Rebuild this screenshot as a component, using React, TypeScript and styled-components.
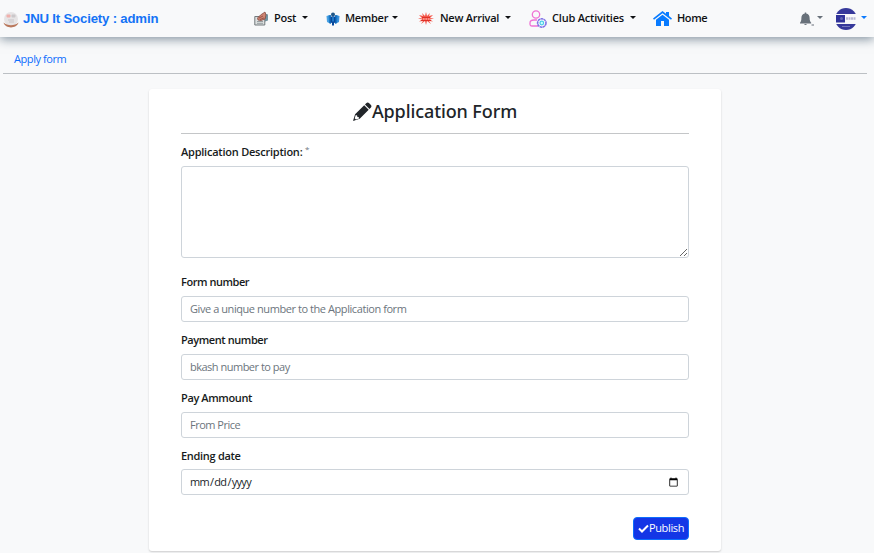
import React from 'react';
import styled, { createGlobalStyle } from 'styled-components';

const GlobalStyle = createGlobalStyle`
  *, *::before, *::after { box-sizing: border-box; }
  body {
    margin: 0;
    height: 553px;
    overflow: hidden;
    background: #f8f9fa;
    color: #212529;
    font-family: "Open Sans", "Noto Sans", sans-serif;
    font-size: 11px;
    line-height: 16px;
  }
  button, input, textarea { font: inherit; color: inherit; }
`;

const Navbar = styled.header`
  position: relative;
  display: flex;
  align-items: center;
  height: 37px;
  padding-left: 3px;
  background: #f8f9fa;
  box-shadow: 0 2px 10px rgba(60, 85, 105, 0.65);
  svg { display: block; flex: none; }
`;

const Brand = styled.a`
  display: flex;
  align-items: center;
  gap: 4px;
  width: 251px;
  color: #1473f6;
  font: bold 13.2px/20px "Liberation Sans", Arial, sans-serif;
  letter-spacing: -0.18px;
  white-space: nowrap;
`;

const Menu = styled.nav`
  display: grid;
  grid-template-columns: 72px 92px 111px 124px 60px;
  height: 36px;
`;

const MenuItem = styled.a<{ $icon: number; $label: number }>`
  display: grid;
  grid-template-columns: ${p => p.$icon}px ${p => p.$label}px auto;
  align-items: center;
  color: #101214;
  font-weight: 600;
  white-space: nowrap;
`;

const Label = styled.span<{ $track?: number }>`
  padding-bottom: 2px;
  letter-spacing: ${p => p.$track ?? -0.2}px;
`;

const Caret = styled.span<{ $color?: string }>`
  width: 6px;
  height: 3px;
  margin-bottom: 2px;
  border: 3px solid transparent;
  border-top-color: ${p => p.$color ?? '#101214'};
  border-bottom: 0;
`;

const Account = styled.div`
  display: flex;
  align-items: center;
  margin-left: auto;
  padding-right: 7px;
`;

const Bell = styled.div`
  display: flex;
  align-items: center;
  gap: 3px;
  margin-right: 12px;
`;

const Profile = styled.div`
  display: flex;
  align-items: center;
  gap: 4px;
`;

const Breadcrumb = styled.div`
  height: 37px;
  margin: 0 7px 0 3px;
  padding: 14px 11px 0;
  border-bottom: 1px solid #bcc0c4;
  color: #0d6efd;
`;

const Card = styled.form`
  width: 572px;
  height: 462px;
  margin: 15px 0 0 149px;
  padding: 0 32px;
  background: #fff;
  border-radius: 3px;
  box-shadow: 0 1px 2px rgba(0, 0, 0, 0.18);
`;

const Title = styled.h1`
  display: flex;
  justify-content: center;
  align-items: center;
  height: 45px;
  margin: 0;
  border-bottom: 1px solid #c4c6c8;
  font: 500 18px/24px "Noto Sans", "Open Sans", sans-serif;
  color: #212529;
  letter-spacing: -0.1px;
`;

const Field = styled.label<{ $height: number }>`
  display: flex;
  flex-direction: column;
  height: ${p => p.$height}px;
`;

const FieldName = styled.span<{ $gap: number; $track: number }>`
  height: ${p => 16 + p.$gap}px;
  font-weight: 600;
  color: #171b20;
  letter-spacing: ${p => p.$track}px;
`;

const Star = styled.small`
  color: #6c757d;
  font-size: 8px;
  line-height: 8px;
  font-weight: 400;
  vertical-align: 4px;
`;

const Description = styled.textarea`
  display: block;
  width: 508px;
  height: 92px;
  padding: 4px 8px;
  border: 1px solid #ced4da;
  border-radius: 3px;
  background: #fff;
  resize: vertical;
  outline: 0;
`;

const Input = styled.input<{ $track?: number }>`
  width: 508px;
  height: 26px;
  padding: 3px 8px 5px;
  border: 1px solid #ced4da;
  border-radius: 3px;
  background: #fff;
  outline: 0;
  letter-spacing: ${p => p.$track ?? 0}px;
  &::placeholder { color: #6c757d; opacity: 1; }
`;

const DateInput = styled(Input)`
  padding: 4px 7px 4px 8px;
  &::-webkit-datetime-edit { padding: 0; }
  &::-webkit-datetime-edit-fields-wrapper { margin-left: -1px; }
`;

const Fields = styled.div`
  padding-top: 10px;
`;

const Actions = styled.div`
  display: flex;
  justify-content: flex-end;
  padding-top: 11px;
`;

const Publish = styled.button`
  display: flex;
  align-items: center;
  justify-content: center;
  width: 56px;
  height: 23px;
  padding: 0 0 2px;
  border: 1px solid #0d6efd;
  border-radius: 4px;
  background: #1436e6;
  color: #fff;
  letter-spacing: -0.35px;
`;

const LogoIcon = () => (
  <svg width="16" height="18" viewBox="0 0 16 18">
    <circle cx="8" cy="9" r="7" fill="#e6e4e5" />
    <path d="M.5 12.500c2 6.500 13 6.500 15 0-4 3.500-11 3.500-15 0z" fill="#b9785c" />
    <rect x="3.500" y="4.500" width="4" height="3" rx="1" fill="#f0b0ac" />
    <rect x="8.500" y="4.500" width="4" height="3" rx="1" fill="#cbc8ca" />
    <path d="M5 10h6M6 12h5" stroke="#c8c5c8" />
  </svg>
);

const PostIcon = () => (
  <svg width="15" height="15" viewBox="0 0 15 15">
    <path d="M11 2.500l3 1v6l-3 1z" fill="#7296a3" />
    <path d="M.8 5.500h10v8.500H.8z" fill="#dce0e0" stroke="#737a7d" />
    <path d="M3 10.500h6M3 12.300h6" stroke="#979ea0" />
    <path d="M3.500 7l3-3 4.500-3 1 3-1 4-4 1.500-3-.5z" fill="#cf8572" stroke="#7c4036" strokeWidth=".7" />
    <path d="M5 7l4-2M6 8.500l4-1.500" stroke="#8a473c" strokeWidth=".8" />
  </svg>
);

const MemberIcon = () => (
  <svg width="14" height="14" viewBox="0 0 14 14">
    <path d="M.5 4L4 3v8.500l-3-1.500z" fill="#4aa3e4" />
    <path d="M13.500 4L10 3v8.500l3-1.500z" fill="#3a91dc" />
    <path d="M2.500 3.500L5 3v9l-2-1z" fill="#1876c4" />
    <path d="M11.500 3.500L9 3v9l2-1z" fill="#1876c4" />
    <circle cx="7" cy="2.500" r="2" fill="#1f5686" />
    <path d="M4.500 5q2.500-1.500 5 0v5.500l-1.500.5v2.500H6V11l-1.500-.5z" fill="#07479a" />
    <path d="M7 5v4.500" stroke="#36aaf0" />
  </svg>
);

const NewIcon = () => (
  <svg width="16" height="14" viewBox="0 0 16 14">
    <path d="M8 0l1 4 3-3-1 3 4-1-3 3h4l-4 1.500 3 2-4-.5 2 3-4-3-1 4-1-4-4 3 2-3-4 .5 3-2L0 6h4L1 3l4 1-1-3 3 3z" fill="#f3574a" />
    <path d="M2.500 7h11" stroke="#ffc3bb" strokeDasharray="1.500 1" />
    <path d="M3 8.500h10M4 5.500h8" stroke="#df3027" />
  </svg>
);

const ClubIcon = () => (
  <svg width="18" height="18" viewBox="0 0 18 18" fill="none">
    <circle cx="7" cy="4.500" r="3.700" stroke="#ef72d5" strokeWidth="1.300" />
    <path d="M9 16H3Q1 16 1 14v-1q0-3 4-3h3" stroke="#ef72d5" strokeWidth="1.300" />
    <circle cx="12.800" cy="13" r="4.200" stroke="#7f70e6" strokeWidth="1.600" strokeDasharray="2.600 .4" />
    <circle cx="12.800" cy="13" r="1.800" fill="#c9ffff" stroke="#4bcbe9" strokeWidth="1.200" />
  </svg>
);

const HomeIcon = () => (
  <svg width="19" height="15" viewBox="0 0 19 15" fill="#087bff">
    <path d="M0 7.500L9.500 0 13 2.800V1h3v4l3 2.500-1 1.300-8.500-6.600L1 8.800z" />
    <path d="M3 8.700L9.500 3.700 16 8.700V15h-5v-5H8v5H3z" />
  </svg>
);

const BellIcon = () => (
  <svg width="14" height="14" viewBox="0 0 14 14" fill="#68717a">
    <path d="M4.800 1.500V.5h1.400v1c2.300.4 3.400 2 3.400 4.200 0 3 .8 4 1.600 5v.8H0v-.8c.8-1 1.400-2 1.400-5 0-2.200 1.100-3.800 3.400-4.200zM4 12h3q-1.500 2-3 0zM11.500 12.500H14v1h-2.500z" />
  </svg>
);

const Avatar = () => (
  <svg width="22" height="22" viewBox="0 0 22 22">
    <circle cx="11" cy="11" r="11" fill="#36399b" />
    <path d="M0 6h22v10H0z" fill="#f8f9fa" />
    <path d="M1 7h9v7.500H1z" fill="#30339a" />
    <circle cx="6.500" cy="10.500" r="1.500" fill="#6267b4" />
    <path d="M11 10.500h10" stroke="#b9bbd5" strokeWidth="2.500" strokeDasharray="2 .5" />
    <path d="M7 18.500h8" stroke="#7377bb" />
  </svg>
);

const PencilIcon = () => (
  <svg width="19" height="19" viewBox="0 0 19 19" fill="#212529">
    <path d="M13.200 1.200q1.500-1.400 3 0l1.500 1.500q1.500 1.500 0 3l-1.200 1.200-4.500-4.500zM11.200 3.200l4.500 4.500-9 9L0 19l2.100-6.700z" />
    <path d="M2.800 13.100l1.300.3.300 1.500 1.500.3.200 1.200-3.200 1.100-1.200-1.200z" fill="#fff" />
  </svg>
);

const CheckIcon = () => (
  <svg width="11" height="10" viewBox="0 0 11 10" fill="none" stroke="#fff" strokeWidth="2">
    <path d="M1 5.500l3 3 6-6" />
  </svg>
);

const menu = [
  { text: 'Post', Icon: PostIcon, icon: 20, label: 28, track: -0.3 },
  { text: 'Member', Icon: MemberIcon, icon: 19, label: 47, track: -0.3 },
  { text: 'New Arrival', Icon: NewIcon, icon: 22, label: 65, track: -0.25 },
  { text: 'Club Activities', Icon: ClubIcon, icon: 23, label: 78, track: -0.2 },
  { text: 'Home', Icon: HomeIcon, icon: 24, label: 30, track: -0.4 },
];

const fields = [
  { name: 'Form number', hint: 'Give a unique number to the Application form', track: -0.45, hintTrack: -0.43 },
  { name: 'Payment number', hint: 'bkash number to pay', track: -0.42, hintTrack: -0.5 },
  { name: 'Pay Ammount', hint: 'From Price', track: -0.38, hintTrack: -0.5 },
];

export default function App() {
  return (
    <>
      <GlobalStyle />
      <Navbar>
        <Brand><LogoIcon />JNU It Society : admin</Brand>
        <Menu>
          {menu.map(({ text, Icon, icon, label, track }) => (
            <MenuItem key={text} $icon={icon} $label={label}>
              <Icon />
              <Label $track={track}>{text}</Label>
              {text !== 'Home' && <Caret />}
            </MenuItem>
          ))}
        </Menu>
        <Account>
          <Bell><BellIcon /><Caret $color="#68717a" /></Bell>
          <Profile><Avatar /><Caret $color="#0d7bfd" /></Profile>
        </Account>
      </Navbar>
      <Breadcrumb><Label $track={-0.42}>Apply form</Label></Breadcrumb>
      <Card>
        <Title><PencilIcon />Application Form</Title>
        <Fields>
          <Field $height={130}>
            <FieldName $gap={6} $track={-0.23}>Application Description: <Star>*</Star></FieldName>
            <Description />
          </Field>
          {fields.map(f => (
            <Field key={f.name} $height={58}>
              <FieldName $gap={6} $track={f.track}>{f.name}</FieldName>
              <Input placeholder={f.hint} $track={f.hintTrack} />
            </Field>
          ))}
          <Field $height={58}>
            <FieldName $gap={5} $track={-0.3}>Ending date</FieldName>
            <DateInput type="date" $track={-0.7} />
          </Field>
        </Fields>
        <Actions><Publish type="button"><CheckIcon />Publish</Publish></Actions>
      </Card>
    </>
  );
}
